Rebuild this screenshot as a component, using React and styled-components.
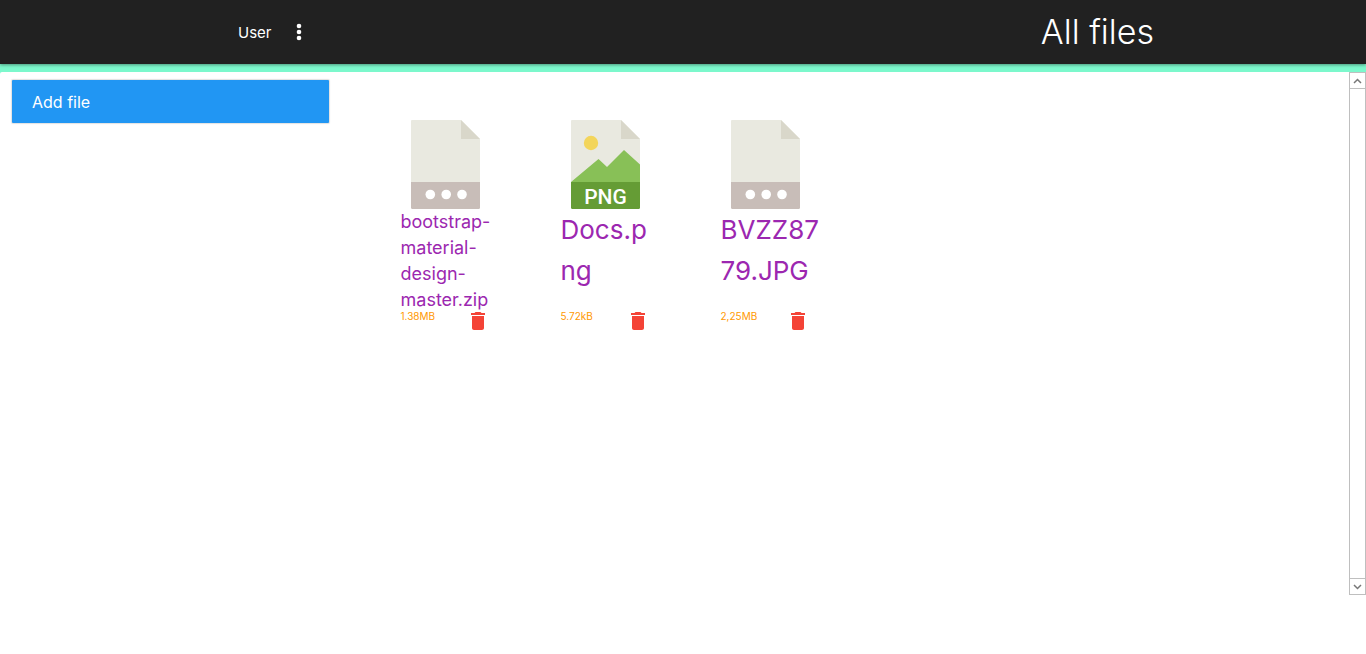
import React from "react";
import styled, { createGlobalStyle } from "styled-components";

const GlobalStyle = createGlobalStyle`
  * { box-sizing: border-box; }
  body {
    margin: 0;
    background: #fff;
    font-family: Inter, "Open Sans", sans-serif;
    font-weight: 400;
  }
`;

const Header = styled.header`
  position: relative;
  display: flex;
  align-items: center;
  justify-content: space-between;
  height: 64px;
  padding: 0 212px 0 238px;
  background: #212121;
  color: #fff;
  box-shadow: 0 1px 3px rgba(0, 0, 0, 0.4);
`;

const UserNav = styled.nav`
  display: flex;
  align-items: center;
  gap: 16px;
`;

const UserLink = styled.a`
  padding-top: 2px;
  color: inherit;
  font-size: 15px;
  line-height: 24px;
  text-decoration: none;
`;

const IconButton = styled.button`
  display: flex;
  padding: 0;
  border: 0;
  background: none;
  color: ${(p) => p.$color};
  cursor: pointer;
`;

const Title = styled.h1`
  margin: 0;
  font-size: 34px;
  font-weight: 300;
  line-height: 40px;
`;

const Content = styled.main`
  padding-top: 8px;
  background: linear-gradient(#7cf8cc 16px, #fff 16px);
`;

const Panel = styled.div`
  display: flex;
  height: 80vh;
  border-radius: 2px;
  background: #fff;
`;

const Sidebar = styled.aside`
  width: calc(25% - 1px);
  padding: 8px 12px;
`;

const AddButton = styled.button`
  width: 100%;
  height: 43px;
  padding: 0 20px;
  border: 0;
  border-radius: 1px;
  background: #2196f3;
  box-shadow: 0 0 1px 1px rgba(0, 0, 0, 0.12);
  color: #fff;
  font: inherit;
  font-size: 16px;
  text-align: left;
  cursor: pointer;
`;

const FileList = styled.section`
  flex: 1;
  display: flex;
  flex-wrap: wrap;
  align-content: flex-start;
  gap: 60px;
  padding: 48px 60px;
`;

const FileCard = styled.article`
  width: 100px;
`;

const Thumb = styled.div`
  display: flex;
  padding-left: 10px;
`;

const FileName = styled.a`
  display: block;
  height: 104px;
  color: #9c27b0;
  font-size: ${(p) => p.$size}px;
  line-height: ${(p) => p.$line}px;
  overflow-wrap: anywhere;
  text-decoration: none;
`;

const FileFooter = styled.div`
  display: flex;
  align-items: flex-start;
  justify-content: space-between;
  padding-right: 11px;
  margin-top: -4px;
`;

const FileSize = styled.span`
  color: #ff9800;
  font-size: 10px;
  line-height: 14px;
`;

const ScrollTrack = styled.div`
  display: flex;
  flex-direction: column;
  justify-content: space-between;
  width: 17px;
  border: 1px solid #bfbfbf;
`;

const ScrollButton = styled.button`
  display: flex;
  align-items: center;
  justify-content: center;
  height: 16px;
  padding: 0;
  border: 0 solid #bfbfbf;
  border-width: ${(p) => (p.$top ? "0 0 1px" : "1px 0 0")};
  background: #fff;
`;

function FileIcon({ kind }) {
  const png = kind === "png";
  return (
    <svg width="69" height="89" viewBox="0 0 69 89" aria-hidden="true">
      <path d="M1 0h49l19 19v43H0V1q0-1 1-1z" fill="#e9e9e0" />
      <path d="M50 0l19 19H50z" fill="#d9d7ca" />
      {png && (
        <>
          <circle cx="20" cy="23" r="7.2" fill="#f3d55b" />
          <path d="M0 62L27.500 39l8.500 8L53 30l16 14.500V62z" fill="#88c057" />
        </>
      )}
      <path d="M0 62h69v25.500q0 1.500-1.500 1.500h-66Q0 89 0 87.500z" fill={png ? "#659c35" : "#c8bdb8"} />
      {png ? (
        <text x="34.500" y="84" textAnchor="middle" fill="#fff" fontFamily="Roboto, sans-serif" fontSize="21" fontWeight="500">
          PNG
        </text>
      ) : (
        <g fill="#fff">
          <circle cx="19.300" cy="74.500" r="4.800" />
          <circle cx="35.200" cy="74.500" r="4.800" />
          <circle cx="51" cy="74.500" r="4.800" />
        </g>
      )}
    </svg>
  );
}

const files = [
  { name: "bootstrap-material-design-master.zip", size: "1.38MB", font: 18, line: 26, kind: "other" },
  { name: "Docs.png", size: "5.72kB", font: 26, line: 41, kind: "png" },
  { name: "BVZZ8779.JPG", size: "2,25MB", font: 26, line: 41, kind: "other" },
];

export default function App() {
  return (
    <>
      <GlobalStyle />
      <Header>
        <UserNav>
          <UserLink href="#user">User</UserLink>
          <IconButton $color="#fff" aria-label="Menu">
            <svg width="24" height="24" viewBox="0 0 24 24" fill="currentColor">
              <circle cx="12" cy="6" r="2.300" />
              <circle cx="12" cy="12" r="2.300" />
              <circle cx="12" cy="18" r="2.300" />
            </svg>
          </IconButton>
        </UserNav>
        <Title>All files</Title>
      </Header>
      <Content>
        <Panel>
          <Sidebar>
            <AddButton>Add file</AddButton>
          </Sidebar>
          <FileList>
            {files.map((f) => (
              <FileCard key={f.name}>
                <Thumb>
                  <FileIcon kind={f.kind} />
                </Thumb>
                <FileName href="#file" $size={f.font} $line={f.line}>
                  {f.name}
                </FileName>
                <FileFooter>
                  <FileSize>{f.size}</FileSize>
                  <IconButton $color="#f44336" aria-label={`Delete ${f.name}`}>
                    <svg width="24" height="24" viewBox="0 0 24 24" fill="currentColor">
                      <path d="M6 19c0 1.100.9 2 2 2h8c1.100 0 2-.9 2-2V7H6v12zM19 4h-3.500l-1-1h-5l-1 1H5v2h14V4z" />
                    </svg>
                  </IconButton>
                </FileFooter>
              </FileCard>
            ))}
          </FileList>
          <ScrollTrack>
            <ScrollButton $top aria-label="Scroll up">
              <svg width="9" height="6" viewBox="0 0 9 6" fill="none" stroke="#777" strokeWidth="1.500">
                <path d="M1 5l3.500-3.500L8 5" />
              </svg>
            </ScrollButton>
            <ScrollButton aria-label="Scroll down">
              <svg width="9" height="6" viewBox="0 0 9 6" fill="none" stroke="#777" strokeWidth="1.500">
                <path d="M1 1l3.500 3.500L8 1" />
              </svg>
            </ScrollButton>
          </ScrollTrack>
        </Panel>
      </Content>
    </>
  );
}
